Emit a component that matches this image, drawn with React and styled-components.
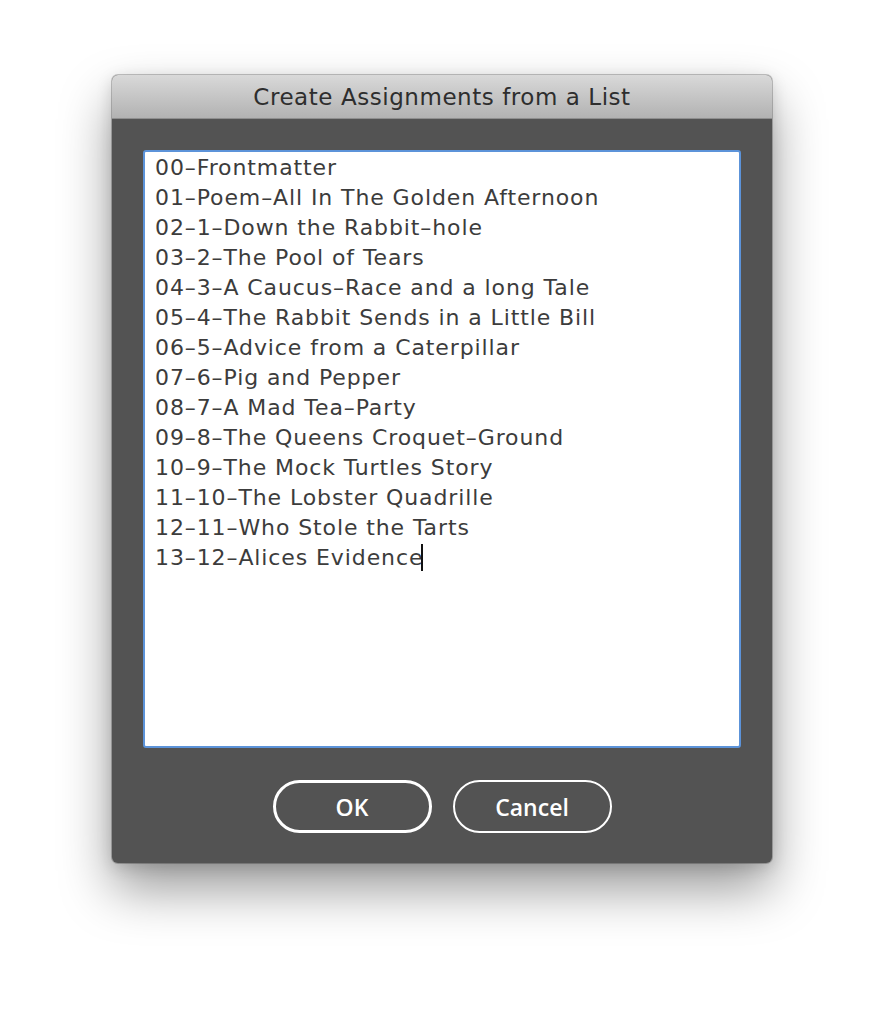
import React from "react";
import styled, { createGlobalStyle } from "styled-components";

const Global = createGlobalStyle`
  html, body { margin: 0; padding: 0; background: #ffffff; }
  body { width: 884px; height: 1012px; overflow: hidden; }
`;

const Stage = styled.div`
  padding: 75px 0 0 112px;
`;

const Window = styled.div`
  width: 660px;
  height: 788px;
  border-radius: 6px;
  overflow: hidden;
  display: flex;
  flex-direction: column;
  background: #535353;
  box-shadow: 0 0 0 1px rgba(0, 0, 0, 0.22), 0 26px 52px rgba(0, 0, 0, 0.4),
    0 4px 16px rgba(0, 0, 0, 0.15);
`;

const TitleBar = styled.div`
  height: 44px;
  flex: none;
  display: flex;
  align-items: center;
  justify-content: center;
  background: linear-gradient(#d9d9d9, #b2b2b2);
  border-bottom: 1px solid #8e8e8e;
  font-family: "DejaVu Sans", "Liberation Sans", sans-serif;
  font-size: 23px;
  letter-spacing: 0.55px;
  color: #2e2e2e;
  padding-top: 1px;
  box-sizing: border-box;
`;

const Body = styled.div`
  flex: 1;
  display: flex;
  flex-direction: column;
  padding: 31px 31px 29px;
`;

const TextArea = styled.div`
  height: 598px;
  box-sizing: border-box;
  background: #ffffff;
  border: 2px solid #5c93d9;
  border-radius: 3px;
  padding: 1px 10px 0;
  font-family: "DejaVu Sans", "Liberation Sans", sans-serif;
  font-size: 22px;
  letter-spacing: 0.9px;
  line-height: 30px;
  color: #3c3c3c;
`;

const Line = styled.div`
  white-space: pre;
`;

const Caret = styled.span`
  display: inline-block;
  width: 2px;
  height: 27px;
  background: #111;
  vertical-align: -6px;
  margin-left: -2px;
`;

const ButtonRow = styled.div`
  display: flex;
  justify-content: center;
  gap: 21px;
  margin-top: 32px;
`;

const Button = styled.button`
  width: 159px;
  height: 53px;
  box-sizing: border-box;
  border-radius: 27px;
  background: transparent;
  border: ${(p) => (p.$primary ? "3px" : "2px")} solid #ffffff;
  color: #ffffff;
  font-family: "Open Sans", "Liberation Sans", sans-serif;
  font-size: 23px;
  font-weight: 600;
  padding: 0;
  display: flex;
  align-items: center;
  justify-content: center;
`;

const items = [
  "00\u2013Frontmatter",
  "01\u2013Poem\u2013All In The Golden Afternoon",
  "02\u20131\u2013Down the Rabbit\u2013hole",
  "03\u20132\u2013The Pool of Tears",
  "04\u20133\u2013A Caucus\u2013Race and a long Tale",
  "05\u20134\u2013The Rabbit Sends in a Little Bill",
  "06\u20135\u2013Advice from a Caterpillar",
  "07\u20136\u2013Pig and Pepper",
  "08\u20137\u2013A Mad Tea\u2013Party",
  "09\u20138\u2013The Queens Croquet\u2013Ground",
  "10\u20139\u2013The Mock Turtles Story",
  "11\u201310\u2013The Lobster Quadrille",
  "12\u201311\u2013Who Stole the Tarts",
  "13\u201312\u2013Alices Evidence",
];

export default function App() {
  return (
    <>
      <Global />
      <Stage>
        <Window>
          <TitleBar>Create Assignments from a List</TitleBar>
          <Body>
            <TextArea>
              {items.map((t, i) => (
                <Line key={i}>
                  {t}
                  {i === items.length - 1 && <Caret />}
                </Line>
              ))}
            </TextArea>
            <ButtonRow>
              <Button $primary>OK</Button>
              <Button>Cancel</Button>
            </ButtonRow>
          </Body>
        </Window>
      </Stage>
    </>
  );
}
